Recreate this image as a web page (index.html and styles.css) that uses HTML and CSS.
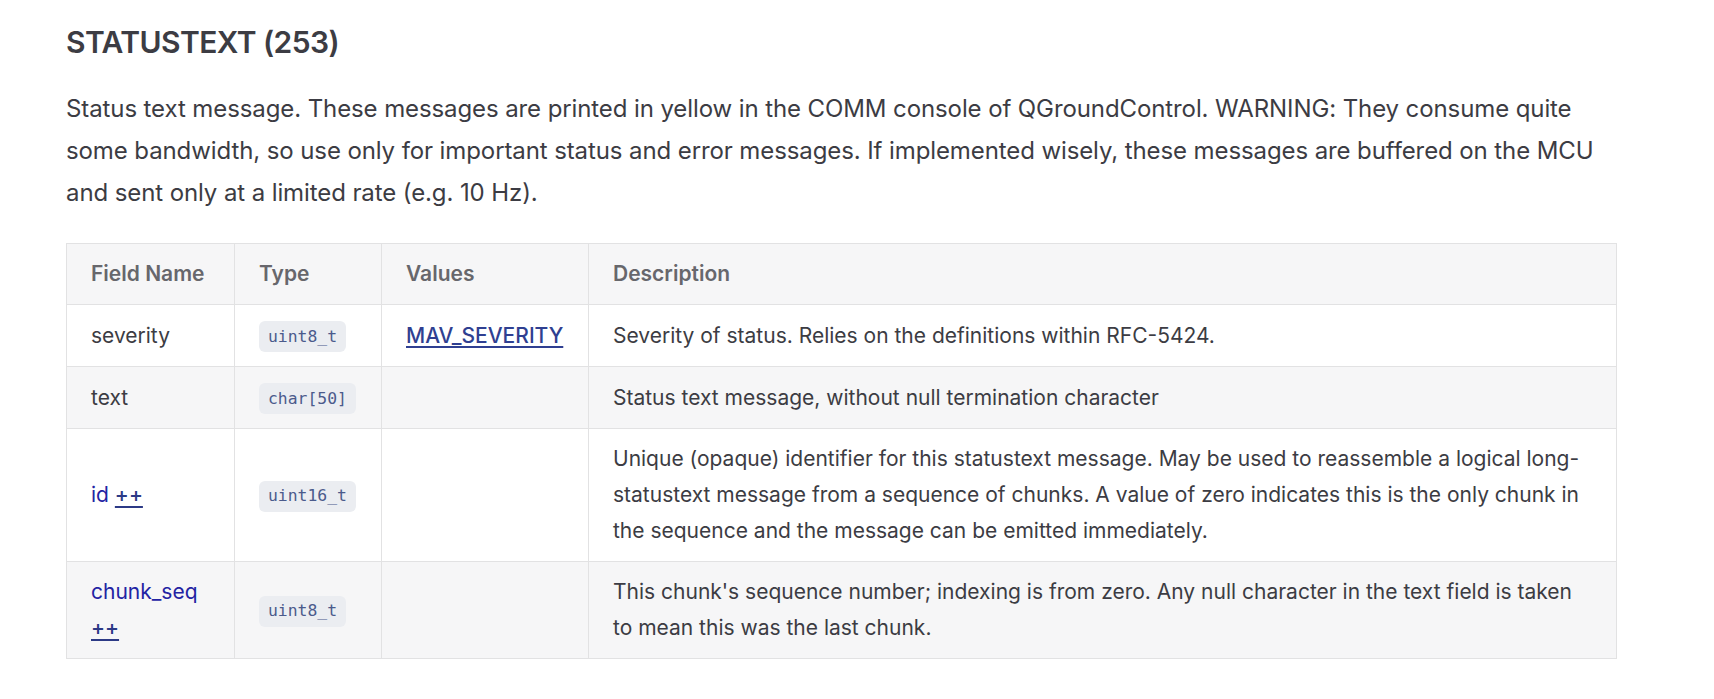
FILE: index.html
```html
<!DOCTYPE html>
<html lang="en">
<head>
<meta charset="utf-8">
<title>STATUSTEXT (253)</title>
<link rel="stylesheet" href="styles.css">
</head>
<body>
<main class="doc">
  <h3 class="title">STATUSTEXT (253)</h3>
  <p class="intro">Status text message. These messages are printed in yellow in the COMM console of QGroundControl. WARNING: They consume quite some bandwidth, so use only for important status and error messages. If implemented wisely, these messages are buffered on the MCU and sent only at a limited rate (e.g. 10 Hz).</p>
  <table class="fields">
    <colgroup>
      <col class="c-name">
      <col class="c-type">
      <col class="c-values">
      <col class="c-desc">
    </colgroup>
    <thead>
      <tr><th>Field Name</th><th>Type</th><th>Values</th><th>Description</th></tr>
    </thead>
    <tbody>
      <tr>
        <td>severity</td>
        <td><code class="code">uint8_t</code></td>
        <td><a class="link" href="#">MAV_SEVERITY</a></td>
        <td>Severity of status. Relies on the definitions within RFC-5424.</td>
      </tr>
      <tr>
        <td>text</td>
        <td><code class="code">char[50]</code></td>
        <td></td>
        <td>Status text message, without null termination character</td>
      </tr>
      <tr>
        <td><span class="ext">id <a class="ext-link" href="#">++</a></span></td>
        <td><code class="code">uint16_t</code></td>
        <td></td>
        <td>Unique (opaque) identifier for this statustext message. May be used to reassemble a logical long-statustext message from a sequence of chunks. A value of zero indicates this is the only chunk in the sequence and the message can be emitted immediately.</td>
      </tr>
      <tr>
        <td><span class="ext">chunk_seq <a class="ext-link" href="#">++</a></span></td>
        <td><code class="code">uint8_t</code></td>
        <td></td>
        <td>This chunk's sequence number; indexing is from zero. Any null character in the text field is taken to mean this was the last chunk.</td>
      </tr>
    </tbody>
  </table>
</main>
</body>
</html>
```

FILE: styles.css
```css
html, body {
  margin: 0;
  padding: 0;
  background: #ffffff;
}

body {
  font-family: Inter, "Noto Sans", "Liberation Sans", sans-serif;
  color: #3c3c43;
}

.doc {
  padding: 21px 0 0 66px;
  width: 1551px;
}

.title {
  margin: 0;
  font-size: 30px;
  line-height: 42px;
  font-weight: 600;
  color: #3c3c43;
  letter-spacing: -0.55px;
}

.intro {
  margin: 25px 0 0;
  font-size: 24px;
  line-height: 42px;
  color: #3c3c43;
  letter-spacing: -0.1px;
}

.fields {
  margin-top: 29px;
  width: 1551px;
  border-collapse: collapse;
  table-layout: fixed;
  font-size: 21px;
  line-height: 36px;
}

.c-name { width: 168px; }
.c-type { width: 147px; }
.c-values { width: 207px; }

.fields th,
.fields td {
  border: 1px solid #e2e2e3;
  padding: 12px 24px;
  text-align: left;
  vertical-align: middle;
}

.fields tbody tr:nth-child(-n+2) td {
  padding-top: 12.5px;
  padding-bottom: 12.5px;
}

.fields th {
  background: #f6f6f7;
  color: #67676c;
  font-weight: 600;
}

.fields tbody tr:nth-child(even) {
  background: #f6f6f7;
}

.fields td {
  color: #3c3c43;
}

.code {
  display: inline-block;
  font-family: "DejaVu Sans Mono", "Liberation Mono", monospace;
  font-size: 16.4px;
  line-height: 22px;
  padding: 4.5px 9px;
  border-radius: 6px;
  background: #ebedf1;
  color: #4b5b8c;
  vertical-align: middle;
}

.link {
  color: #2f3f91;
  font-weight: 500;
  text-decoration: underline;
  text-underline-offset: 3px;
  text-decoration-thickness: 1.5px;
}

.ext {
  color: #2323a3;
}

.ext-link {
  color: #2c3a86;
  font-weight: 500;
  text-decoration: underline;
  text-underline-offset: 4px;
  text-decoration-thickness: 2px;
}
```
